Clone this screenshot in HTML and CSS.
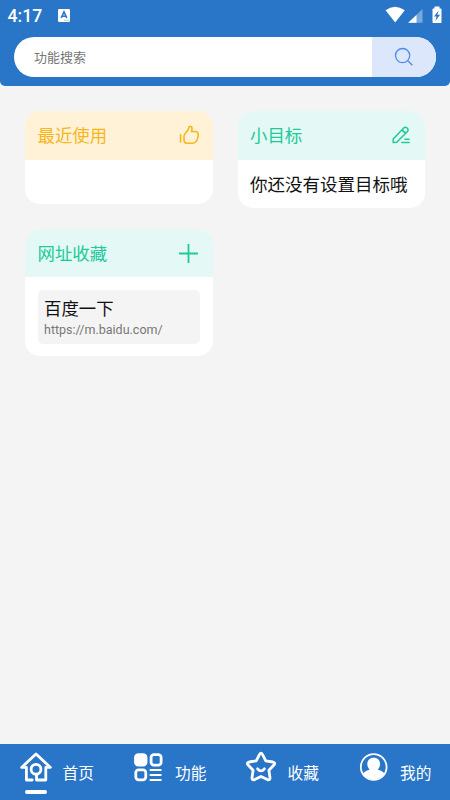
FILE: index.html
```html
<!DOCTYPE html>
<html lang="zh-CN">
<head>
<meta charset="utf-8">
<title>首页</title>
<link rel="stylesheet" href="styles.css">
</head>
<body>
<div class="app">
  <header class="header">
    <div class="status">
      <span class="clock">4:17</span>
      <svg class="notice" viewBox="0 0 12 13"><rect width="12" height="13" rx="1.2" fill="#fff"/><path d="M3.2 9 6 3l2.8 6M4.3 7.2h3.4" fill="none" stroke="#2975c7" stroke-width="1.6"/><path d="M6 11.3h5" stroke="#8db5e1" stroke-width=".7"/></svg>
      <svg class="signals" viewBox="0 0 58 18">
        <path d="M.5 4.2Q10 -2.8 19.8 4.2L10.2 16.5Z" fill="#fff"/>
        <path d="M37.5 3v13.8H23.2Z" fill="#78a9dc"/><path d="M31.5 9v7.8h-8.3Z" fill="#fff"/>
        <path d="M49.5 .5h5v2h1.2q.8 0 .8.8v12.9q0 .8-.8.8h-7.4q-.8 0-.8-.8V3.3q0-.8.8-.8h1.2Z" fill="#fff"/>
        <path d="M53.5 4.5 49 10.5h2.6L50.4 15l4.7-6.2h-2.7Z" fill="#2975c7"/>
      </svg>
    </div>
    <div class="search">
      <span class="placeholder">功能搜索</span>
      <button class="search-btn" aria-label="搜索"><svg viewBox="0 0 20 20"><circle cx="8.6" cy="8.6" r="7.1"/><path d="m13.8 13.8 4.6 4.4"/></svg></button>
    </div>
  </header>
  <main class="main">
    <div class="column">
      <section class="card recent">
        <div class="card-head yellow"><h2>最近使用</h2>
          <svg class="thumb" viewBox="0 0 21 20"><path d="M1.6 9.7v7.4M5 11.2c0-2.6 4.3-5.1 4.7-8.1.1-1.3 1-1.9 2-1.7 1.7.4 1.5 2.5.8 5.1h3.4c2.2 0 3.3 1.3 3.3 3.1 0 4.6-2.3 8.7-5.4 8.7H8.3C5.7 18.3 5 16.4 5 14.4Z"/></svg>
        </div>
      </section>
      <section class="card sites">
        <div class="card-head green"><h2>网址收藏</h2>
          <svg class="plus" viewBox="0 0 19 19"><path d="M9.5.5v18M.5 9.5h18"/></svg>
        </div>
        <div class="site"><div class="site-name">百度一下</div><div class="site-url">https://m.baidu.com/</div></div>
      </section>
    </div>
    <div class="column">
      <section class="card goal">
        <div class="card-head green"><h2>小目标</h2>
          <svg class="pencil" viewBox="0 0 18 18"><path d="M1.2 16.6V13L11.7 1.9q1.8-1.3 3.4.1 1.7 1.7.4 3.5L4.7 16.3ZM10.5 3.4q.2 2.8 3.6 3.4M9.8 16.6h7.3M13 13.3h4.1"/></svg>
        </div>
        <p class="goal-text">你还没有设置目标哦</p>
      </section>
    </div>
  </main>
  <nav class="tabs">
    <a class="tab active"><span class="icon"><svg viewBox="0 0 34 32"><path d="M13.2 29H7.4V16.4H2.6L17 3l14.4 13.4h-4.6V29h-9.3v-5.6"/><circle cx="17" cy="18.2" r="4.9"/></svg></span><span>首页</span></a>
    <a class="tab"><span class="icon"><svg viewBox="0 0 34 32"><rect x="3.5" y="3.7" width="10.5" height="10.5" rx="2.8" fill="#fff"/><rect x="19.1" y="3.7" width="10" height="10.5" rx="2.8"/><rect x="3.8" y="18.8" width="10" height="10" rx="2.8"/><path class="lines" d="M18.5 19h10.2M18.5 24h10.2M18.5 29h10.2"/></svg></span><span>功能</span></a>
    <a class="tab"><span class="icon"><svg viewBox="0 0 34 32"><path d="M15.4 3.6Q17 .8 18.6 3.6l3.2 6.2 7.1 1.2q3 .8 1 3l-5 5.2 1.1 7.5q.1 3-2.7 1.9L17 25.5l-6.3 3.1Q7.9 29.7 8 26.7l1.1-7.5-5-5.2q-2-2.2 1-3l7.1-1.2Z"/><path d="M13.6 17.8q3.4 4.1 6.8 0"/></svg></span><span>收藏</span></a>
    <a class="tab"><span class="icon"><svg viewBox="0 0 34 32"><circle class="ring" cx="16.7" cy="16" r="12.9"/><path class="person" d="M16.7 6.8c4 0 6.4 2.6 6.4 6.2 0 2.6-1.1 4.3-2.4 5.4 2.5.9 5 1.8 6.6 3.8a12.3 12.3 0 0 1-21.2 0c1.6-2 4.1-2.9 6.6-3.8-1.3-1.1-2.4-2.8-2.4-5.4 0-3.6 2.4-6.2 6.4-6.2Z"/></svg></span><span>我的</span></a>
  </nav>
</div>
</body>
</html>
```

FILE: styles.css
```css
* { box-sizing: border-box; }
body { margin: 0; font-family: Roboto, "Noto Sans CJK SC", sans-serif; color: #111; }
h2, p { margin: 0; font-weight: 400; }
svg { display: block; fill: none; flex: none; }
.app { height: 800px; display: flex; flex-direction: column; background: #f4f4f4; overflow: hidden; }
.header { height: 85.5px; background: #2975c7; border-radius: 0 0 5px 5px; }
.status { height: 37px; display: flex; align-items: flex-start; padding: 6px 7.5px 0 7.5px; }
.clock { width: 50.5px; font-size: 17.6px; line-height: 20px; font-weight: 500; color: #fff; }
.notice { width: 12px; height: 13px; margin-top: 2.5px; }
.signals { width: 58px; height: 18px; margin-left: auto; }
.search { height: 40px; margin: 0 14px; display: flex; align-items: center; background: #fff; border-radius: 20px; overflow: hidden; }
.placeholder { padding: 0 0 2px 20px; font-size: 13px; color: #777; }
.search-btn { width: 64.5px; height: 40px; margin-left: auto; padding: 0; border: 0; background: #dce7fb; display: grid; place-items: center; }
.search-btn svg { width: 20px; height: 20px; stroke: #4b8bee; stroke-width: 1.3; }
.main { flex: 1; display: flex; align-items: flex-start; gap: 25px; padding: 25.5px 25px 0; }
.column { flex: 1; display: flex; flex-direction: column; gap: 25px; }
.card { background: #fff; border-radius: 15px; overflow: hidden; }
.card-head { height: 48.5px; padding: 0 13px 0 12.5px; display: flex; align-items: center; justify-content: space-between; }
.card-head h2 { padding-top: 2px; font-size: 17.4px; line-height: 26px; }
.yellow { background: #fff2d6; color: #f8b51d; }
.green { background: #e4f8f6; color: #20ca97; }
.card-head svg { stroke: currentColor; stroke-linecap: round; stroke-linejoin: round; }
.thumb { width: 21px; height: 20px; stroke-width: 1.6; }
.pencil { width: 18px; height: 18px; margin-right: 2.5px; stroke-width: 1.5; }
.plus { width: 19px; height: 19px; margin: 1px 1.5px 0 0; stroke-width: 1.8; }
.recent { height: 92.5px; }
.sites { height: 127.5px; }
.goal { height: 97px; }
.goal-text { padding: 13px 12.5px; font-size: 17.5px; line-height: 25px; }
.site { height: 54px; margin: 12.5px; padding: 7px 6.5px; background: #f4f4f4; border-radius: 5px; }
.site-name { font-size: 17.4px; line-height: 25px; }
.site-url { font-size: 12.5px; line-height: 16px; color: #777; }
.tabs { height: 56px; display: flex; background: #2975c7; }
.tab { flex: 1; position: relative; display: flex; align-items: center; padding-left: 19px; color: #fff; font-size: 15.7px; }
.icon { width: 43.5px; height: 42px; }
.icon svg { width: 34px; height: 32px; stroke: #fff; stroke-width: 2.8; stroke-linecap: round; stroke-linejoin: round; }
.icon .ring { stroke-width: 1.8; }
.icon .person { fill: #fff; stroke: none; }
.icon .lines { stroke-width: 2.1; }
.active::after { content: ""; position: absolute; left: 24.5px; bottom: 6px; width: 22.5px; height: 4px; border-radius: 2px; background: #fff; }
```
